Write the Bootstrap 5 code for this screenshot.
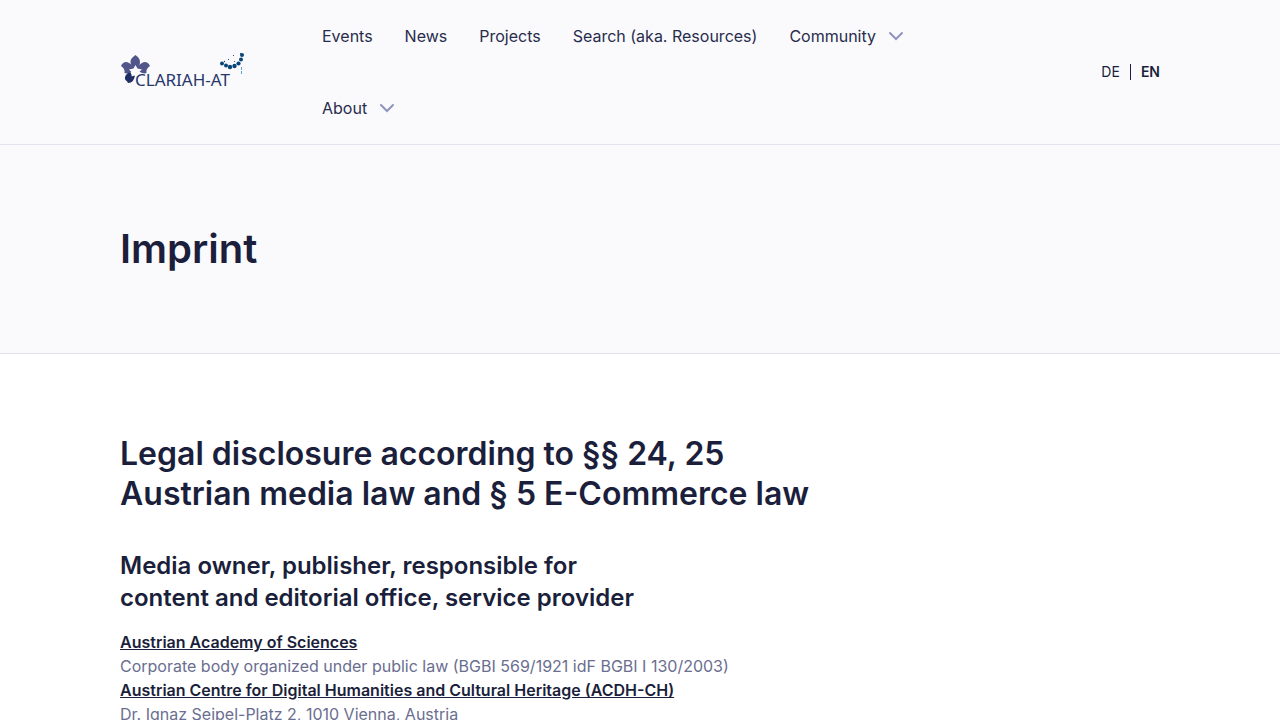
<!DOCTYPE html>
<html lang="en">
<head>
<meta charset="utf-8">
<meta name="viewport" content="width=device-width, initial-scale=1">
<title>Imprint | CLARIAH-AT</title>
<link href="https://cdn.jsdelivr.net/npm/bootstrap@5.3.0/dist/css/bootstrap.min.css" rel="stylesheet">
<style>
body { font-family: Inter, "Liberation Sans", sans-serif; font-weight: 400; color: #6a6e90; }
.page-width { max-width: 1088px; padding: 0 24px; }
.surface { background: #fafafc; border-bottom: 1px solid #e3e3ee; }
.ink, .ink:hover { color: #1b1f3b; }
.main-nav { margin: 0 76px 0 58px; }
.main-nav .nav-link, .main-nav .nav-link:hover { color: #282c4c; padding: 24px 16px; line-height: 24px; }
.lang { font-size: 14px; line-height: 24px; column-gap: 10px; }
.lang .divider { width: 1px; height: 16px; background: #1b1f3b; }
h1, h2, h3 { color: #1b1f3b; margin: 0; text-wrap: balance; }
h1 { font-size: 40px; line-height: 48px; font-weight: 600; }
h2 { font-size: 32px; line-height: 40px; font-weight: 600; }
h3 { font-size: 24px; line-height: 32px; font-weight: 600; margin: 36px 0 16px; }
.section-space { padding-top: 80px; padding-bottom: 80px; }
.prose { max-width: 720px; }
.prose a { font-weight: 600; }
.logo-text { font: 400 17px "Noto Sans", sans-serif; }
</style>
</head>
<body>
<header class="surface">
  <div class="container-fluid page-width d-flex align-items-center">
    <a href="#" class="flex-shrink-0" aria-label="CLARIAH-AT">
      <svg class="d-block overflow-visible" width="128" height="40" viewBox="0 0 128 40">
        <g fill="#51568a">
          <path d="M15.500 3c2.500 2 4.500 3.500 4.500 7 0 3-1.500 5-2.500 7h-4c-1-2-3-4-3-7 0-3.500 2.500-5 5-7Z"/>
          <path d="M1 14c1.500-3.500 5-5 8-3 2.500 1 4 4 5 6l-3 3c-2 1-4 2-6.500 1 .500-3-.500-5-3.500-7Z"/>
          <path d="M30 14c-1.500-3.500-5-5-8-3-2.500 1-4 4-5 6l3 3c2 1 4 2 6.500 1-.500-3 .500-5 3.500-7Z"/>
        </g>
        <path fill="#1f2f65" d="M10.500 20c-3.500 1-6 4-5.500 7 .500 2 2 1.500 3 4 4.500 0 6-3 7-7.500-2 .500-4-.500-4.500-3.500Z"/>
        <path fill="#fafafc" d="m15.500 13 2 3.500 4.500 1-3.500 3 .500 4-3.500-1.500-4 1.500.500-4-3-3 4.500-1Z"/>
        <text class="logo-text" x="15" y="34" fill="#28376c">CLARIAH-AT</text>
        <g fill="#074477">
          <circle cx="102" cy="11.500" r="2"/><circle cx="106" cy="13.500" r="2"/><circle cx="110" cy="15" r="2.200"/><circle cx="114.500" cy="14" r="2.200"/><circle cx="118.500" cy="11.500" r="2.100"/><circle cx="121" cy="7.500" r="2"/><circle cx="122" cy="3" r="2"/>
          <circle cx="104.500" cy="9.500" r=".7"/><circle cx="108.500" cy="7.500" r=".6"/><circle cx="113.500" cy="3.500" r=".6"/><circle cx="114.500" cy="9.500" r=".6"/><circle cx="120.500" cy="1.500" r=".6"/>
        </g>
        <path d="M121.500 15v3M121.500 19v3" stroke="#5fa5cb"/>
      </svg>
    </a>
    <nav class="main-nav nav flex-grow-1" aria-label="Main">
      <a class="nav-link" href="#">Events</a>
      <a class="nav-link" href="#">News</a>
      <a class="nav-link" href="#">Projects</a>
      <a class="nav-link" href="#">Search (aka. Resources)</a>
      <button type="button" class="nav-link btn border-0 d-flex align-items-center gap-2">Community
        <svg width="24" height="24" viewBox="0 0 24 24" fill="none" stroke="#8e94bd" stroke-width="2" stroke-linecap="round"><path d="m6 9 6 6 6-6"/></svg></button>
      <button type="button" class="nav-link btn border-0 d-flex align-items-center gap-2">About
        <svg width="24" height="24" viewBox="0 0 24 24" fill="none" stroke="#8e94bd" stroke-width="2" stroke-linecap="round"><path d="m6 9 6 6 6-6"/></svg></button>
    </nav>
    <div class="lang d-flex align-items-center flex-shrink-0">
      <a href="#" class="ink text-decoration-none">DE</a>
      <span class="divider"></span>
      <a href="#" class="ink text-decoration-none fw-semibold" aria-current="true">EN</a>
    </div>
  </div>
</header>
<main>
  <div class="surface">
    <div class="container-fluid page-width section-space"><h1>Imprint</h1></div>
  </div>
  <div class="container-fluid page-width section-space">
    <div class="prose">
      <h2>Legal disclosure according to §§ 24, 25 Austrian media law and § 5 E-Commerce law</h2>
      <h3>Media owner, publisher, responsible for content and editorial office, service provider</h3>
      <p><a class="ink" href="#">Austrian Academy of Sciences</a><br>
      Corporate body organized under public law (BGBI 569/1921 idF BGBI I 130/2003)<br>
      <a class="ink" href="#">Austrian Centre for Digital Humanities and Cultural Heritage (ACDH-CH)</a><br>
      Dr. Ignaz Seipel-Platz 2, 1010 Vienna, Austria</p>
    </div>
  </div>
</main>
<script src="https://cdn.jsdelivr.net/npm/bootstrap@5.3.0/dist/js/bootstrap.bundle.min.js"></script>
</body>
</html>
